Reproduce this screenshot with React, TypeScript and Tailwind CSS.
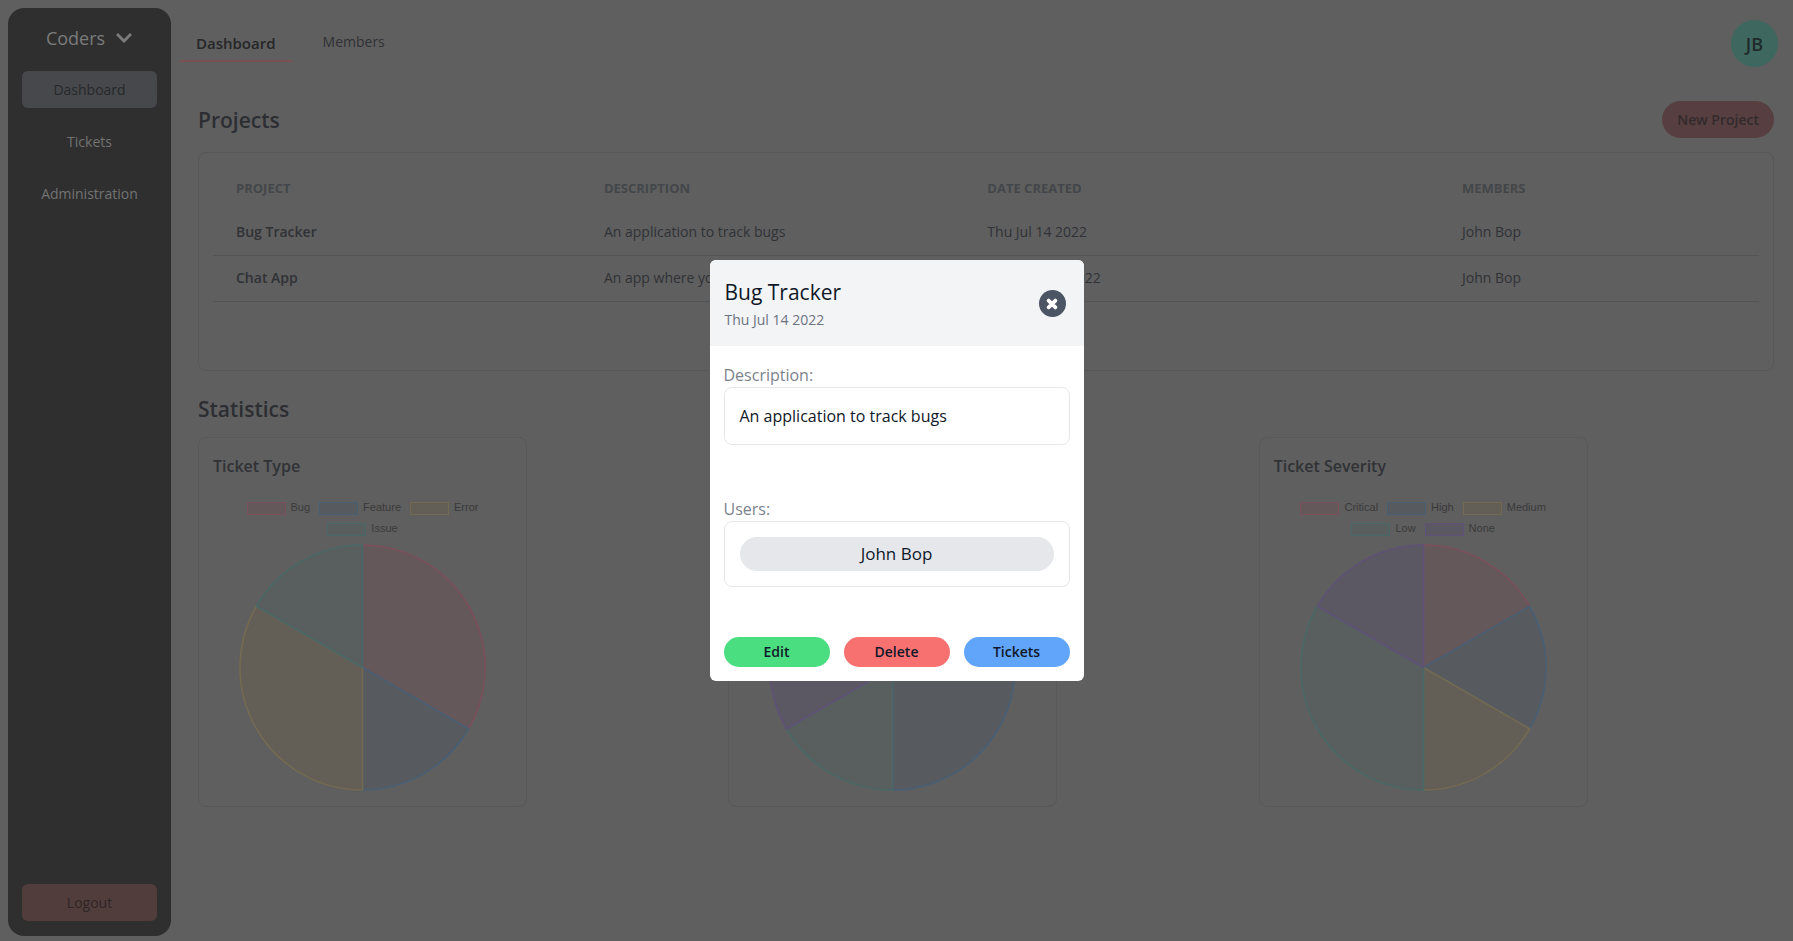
import { FaChevronDown, FaTimes } from "react-icons/fa";

type Tone = "red" | "blue" | "yellow" | "teal" | "purple";

const sliceClasses: Record<Tone, string> = {
  red: "fill-[#64585b] stroke-[#7b4f5b]",
  blue: "fill-[#575b60] stroke-[#495f74]",
  yellow: "fill-[#635f57] stroke-[#746a52]",
  teal: "fill-[#585f5e] stroke-[#4a6867]",
  purple: "fill-[#5c5863] stroke-[#605177]",
};

const swatchClasses: Record<Tone, string> = {
  red: "bg-[#64585b] border-[#7b4f5b]",
  blue: "bg-[#575b60] border-[#495f74]",
  yellow: "bg-[#635f57] border-[#746a52]",
  teal: "bg-[#585f5e] border-[#4a6867]",
  purple: "bg-[#5c5863] border-[#605177]",
};

type Slice = { tone: Tone; parts: number };
type LegendItem = { tone: Tone; label: string };

const projects = [
  { name: "Bug Tracker", description: "An application to track bugs", date: "Thu Jul 14 2022", members: "John Bop" },
  { name: "Chat App", description: "An app where you can chat", date: "Wed Aug 10 2022", members: "John Bop" },
];

const charts: { title: string; legend: LegendItem[][]; slices: Slice[] }[] = [
  {
    title: "Ticket Type",
    legend: [
      [
        { tone: "red", label: "Bug" },
        { tone: "blue", label: "Feature" },
        { tone: "yellow", label: "Error" },
      ],
      [{ tone: "teal", label: "Issue" }],
    ],
    slices: [
      { tone: "red", parts: 2 },
      { tone: "blue", parts: 1 },
      { tone: "yellow", parts: 2 },
      { tone: "teal", parts: 1 },
    ],
  },
  {
    title: "Ticket Status",
    legend: [],
    slices: [
      { tone: "blue", parts: 3 },
      { tone: "teal", parts: 1 },
      { tone: "purple", parts: 2 },
    ],
  },
  {
    title: "Ticket Severity",
    legend: [
      [
        { tone: "red", label: "Critical" },
        { tone: "blue", label: "High" },
        { tone: "yellow", label: "Medium" },
      ],
      [
        { tone: "teal", label: "Low" },
        { tone: "purple", label: "None" },
      ],
    ],
    slices: [
      { tone: "red", parts: 1 },
      { tone: "blue", parts: 1 },
      { tone: "yellow", parts: 1 },
      { tone: "teal", parts: 2 },
      { tone: "purple", parts: 1 },
    ],
  },
];

function Pie({ slices, label }: { slices: Slice[]; label: string }) {
  const total = slices.reduce((sum, s) => sum + s.parts, 0);
  const r = 123;
  let angle = -Math.PI / 2;
  return (
    <svg viewBox="-124 -124 248 248" className="mx-auto block size-[247px]" role="img" aria-label={label}>
      {slices.map((slice) => {
        const start = angle;
        const sweep = (slice.parts / total) * Math.PI * 2;
        angle += sweep;
        const d = `M0 0L${r * Math.cos(start)} ${r * Math.sin(start)}A${r} ${r} 0 ${sweep > Math.PI ? 1 : 0} 1 ${r * Math.cos(angle)} ${r * Math.sin(angle)}Z`;
        return <path key={slice.tone} d={d} strokeWidth="1.6" strokeLinejoin="bevel" className={sliceClasses[slice.tone]} />;
      })}
    </svg>
  );
}

function ChartCard({ title, legend, slices }: (typeof charts)[number]) {
  return (
    <section className="w-[329px] rounded-lg border border-[#585859] px-[14px] pt-4 pb-[15px]">
      <h3 className="text-base leading-6 font-semibold text-[#303236]">{title}</h3>
      <div className="mt-[21px] flex h-[45px] flex-col gap-1">
        {legend.map((row, i) => (
          <ul key={i} className="flex justify-center gap-[9px] font-['Liberation_Sans',sans-serif] text-[11px] leading-[17px] text-[#3a3a3a]">
            {row.map((item) => (
              <li key={item.label} className="flex items-center gap-[5px]">
                <span className={`mt-px h-[13px] w-[39px] border ${swatchClasses[item.tone]}`} />
                {item.label}
              </li>
            ))}
          </ul>
        ))}
      </div>
      <Pie slices={slices} label={title} />
    </section>
  );
}

function Sidebar() {
  return (
    <aside className="flex w-[163px] shrink-0 flex-col rounded-2xl bg-[#2f2f2f] px-[14px] pt-[14px] pb-[15px] text-sm">
      <button type="button" className="flex h-8 items-center justify-center gap-2.5 text-lg text-[#7b7b7b]">
        Coders
        <FaChevronDown className="size-[18px]" />
      </button>
      <nav className="mt-[17px] flex flex-col gap-[15px] text-center leading-[37px] text-[#737373]">
        <a href="#dashboard" className="rounded-md bg-[#46484c] font-medium text-[#27282b]">Dashboard</a>
        <a href="#tickets">Tickets</a>
        <a href="#administration">Administration</a>
      </nav>
      <button type="button" className="mt-auto h-[37px] rounded-md bg-[#523d3d] text-[#2e2626]">Logout</button>
    </aside>
  );
}

function ProjectsTable() {
  return (
    <div className="mt-3.5 h-[219px] rounded-lg border border-[#565758] p-[14px]">
      <table className="w-full table-fixed text-left text-sm text-[#303236]">
        <thead className="text-[13px] text-[#43464a]">
          <tr className="h-[42px]">
            <th className="w-[23.8%] px-[23px]">PROJECT</th>
            <th className="w-[24.8%] px-[23px]">DESCRIPTION</th>
            <th className="w-[30.7%] px-[23px]">DATE CREATED</th>
            <th className="px-[23px]">MEMBERS</th>
          </tr>
        </thead>
        <tbody>
          {projects.map((p) => (
            <tr key={p.name} className="h-[46px] border-b border-[#535456]">
              <th scope="row" className="px-[23px] font-semibold">{p.name}</th>
              <td className="px-[23px]">{p.description}</td>
              <td className="px-[23px]">{p.date}</td>
              <td className="px-[23px]">{p.members}</td>
            </tr>
          ))}
        </tbody>
      </table>
    </div>
  );
}

function ProjectModal() {
  return (
    <div className="fixed inset-0 flex items-center justify-center">
      <div role="dialog" aria-modal="true" aria-labelledby="modal-title" className="w-[374px] overflow-hidden rounded-md bg-white text-gray-900">
        <header className="flex h-[86px] items-center justify-between bg-[#f3f4f6] pt-px pr-[18px] pl-[15px]">
          <div>
            <h2 id="modal-title" className="text-[21px] leading-8">Bug Tracker</h2>
            <p className="text-sm leading-6 text-[#6b7280]">Thu Jul 14 2022</p>
          </div>
          <button type="button" aria-label="Close" className="flex size-[27px] items-center justify-center rounded-full bg-[#4b5563] text-white">
            <FaTimes className="size-[14px] stroke-white stroke-[40px]" />
          </button>
        </header>
        <div className="px-[14px] pt-[17px] pb-[14px]">
          <h3 className="text-base leading-6 text-[#7c828c]">Description:</h3>
          <p className="flex h-[58px] items-center rounded-lg border border-gray-200 px-[15px] text-base">An application to track bugs</p>
          <h3 className="mt-[52px] text-base leading-6 text-[#7c828c]">Users:</h3>
          <ul className="rounded-lg border border-gray-200 px-[15px] py-[15px]">
            <li className="rounded-full bg-gray-200 text-center text-[17px] leading-[34px]">John Bop</li>
          </ul>
          <div className="mt-[50px] grid grid-cols-3 gap-[14px] text-sm leading-[30px] font-semibold">
            <button type="button" className="rounded-full bg-[#4ade80]">Edit</button>
            <button type="button" className="rounded-full bg-[#f87171]">Delete</button>
            <button type="button" className="rounded-full bg-[#60a5fa]">Tickets</button>
          </div>
        </div>
      </div>
    </div>
  );
}

export default function App() {
  return (
    <div className="flex min-h-screen bg-[#5f5f5f] pt-2 pb-[5px] pl-2 font-['Open_Sans','Noto_Sans',sans-serif]">
      <Sidebar />
      <main className="min-w-0 flex-1 pr-[19px] pl-[9px]">
        <header className="flex items-start justify-between">
          <nav className="flex gap-4 pt-[15px]">
            <a href="#overview" className="border-b-2 border-[#7a5053] px-4 pt-2 pb-[5px] text-[15px] leading-6 font-semibold text-[#262628]">Dashboard</a>
            <a href="#members" className="px-[15px] pt-[7px] text-sm leading-6 text-[#2f3134]">Members</a>
          </nav>
          <button type="button" className="mt-3 -mr-1 size-[47px] rounded-full bg-[#3e685f] text-lg font-semibold text-[#202a2a]">JB</button>
        </header>
        <div className="pl-[18px]">
          <div className="mt-[34px] flex items-center justify-between">
            <h1 className="text-[21px] leading-7 font-semibold text-[#2c2e33]">Projects</h1>
            <button type="button" className="h-[37px] rounded-full bg-[#573f41] px-[15px] text-sm font-semibold text-[#332a2c]">New Project</button>
          </div>
          <ProjectsTable />
          <h2 className="mt-6 text-[21px] leading-7 font-semibold text-[#2c2e33]">Statistics</h2>
          <div className="mt-3.5 grid grid-cols-3 gap-[15px]">
            {charts.map((chart) => (
              <ChartCard key={chart.title} {...chart} />
            ))}
          </div>
        </div>
      </main>
      <ProjectModal />
    </div>
  );
}
